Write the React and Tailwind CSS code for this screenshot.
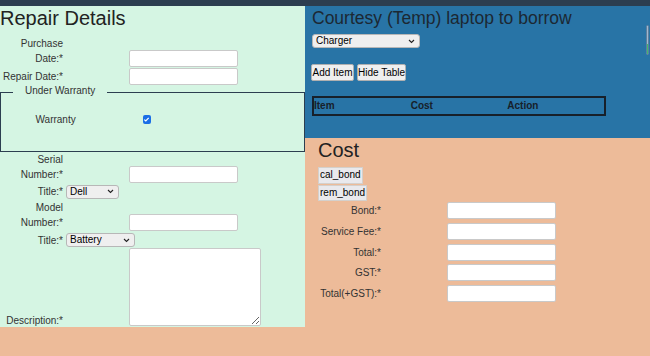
import React from 'react';

const Chevron = () => (
  <svg width="7" height="5" viewBox="0 0 7 5" className="absolute right-[5px] top-[4.5px] pointer-events-none">
    <polyline points="1,1 3.5,3.5 6,1" fill="none" stroke="#222" strokeWidth="1.1" />
  </svg>
);

const Select = ({ value, className }) => (
  <div className={`relative h-[14px] ${className}`}>
    <select
      defaultValue={value}
      className="block appearance-none w-full h-full bg-[#efefef] border border-[#b7b7b7] rounded-[3px] text-[10px] leading-[12px] pl-[3px] text-black"
    >
      <option>{value}</option>
    </select>
    <Chevron />
  </div>
);

const TextInput = ({ className = '' }) => (
  <input type="text" className={`w-[109px] h-[17px] bg-white border border-[#c9c9c9] rounded-[2px] shrink-0 ${className}`} />
);

const Label = ({ children, className = '' }) => (
  <div className={`w-[64px] shrink-0 text-right pr-[1px] ${className}`}>{children}</div>
);

const RepairDetails = () => (
  <div className="w-[305px] h-[321px] shrink-0 bg-[#d5f5e3] text-[#333] text-[10px] leading-[15px]">
    <h2 className="text-[20px] leading-[24px] text-[#222]">Repair Details</h2>

    {/* purchase date */}
    <div className="mt-[6px] flex items-end">
      <Label className="pb-[1px]">Purchase<br />Date:*</Label>
      <TextInput className="ml-[65px]" />
    </div>
    <div className="mt-[1px] flex items-center">
      <Label>Repair Date:*</Label>
      <TextInput className="ml-[65px]" />
    </div>

    <fieldset className="mt-[-2px] border-[1.5px] border-[#2c3e50]">
      <legend className="ml-[12px] px-[12px] pb-[4px]">Under Warranty</legend>
      <div className="flex items-center pt-[10px] pb-[24px] pl-[34.5px]">
        <span className="w-[107px]">Warranty</span>
        <span className="w-[8.5px] h-[8.5px] rounded-[2px] bg-[#1a6ee6] flex items-center justify-center">
          <svg width="7" height="7" viewBox="0 0 7 7">
            <polyline points="1.3,3.6 2.8,5 5.7,1.8" fill="none" stroke="#fff" strokeWidth="1.2" />
          </svg>
        </span>
      </div>
    </fieldset>

    {/* serial */}
    <div className="flex items-end">
      <Label className="pb-[1px]">Serial<br />Number:*</Label>
      <TextInput className="ml-[65px]" />
    </div>
    <div className="mt-[1px] flex items-center">
      <Label>Title:*</Label>
      <Select value="Dell" className="ml-[2px] w-[53px]" />
    </div>

    {/* model */}
    <div className="mt-[1px] flex items-end">
      <Label className="pb-[1px]">Model<br />Number:*</Label>
      <TextInput className="ml-[65px]" />
    </div>
    <div className="mt-[1.5px] flex items-center">
      <Label>Title:*</Label>
      <Select value="Battery" className="ml-[2px] w-[69px]" />
    </div>

    <div className="flex items-end">
      <Label>Description:*</Label>
      <textarea className="ml-[65px] mb-[2px] w-[132px] h-[78px] bg-white border border-[#c9c9c9] rounded-[2px] resize" />
    </div>
  </div>
);

const Courtesy = () => (
  <div className="relative h-[132px] bg-[#2874a6] pl-[7px] pt-[1.5px] text-[#1c2833]">
    <h3 className="text-[17.5px] leading-[21px]">Courtesy (Temp) laptop to borrow</h3>
    <Select value="Charger" className="mt-[5.5px] w-[108px]" />
    <div className="mt-[15.5px] ml-[-1px] flex gap-[3px]">
      <button className="w-[43px] h-[17px] bg-[#efefef] border border-[#b0b0b0] rounded-[2px] text-[10px] leading-[15px] text-black whitespace-nowrap overflow-hidden">
        Add Item
      </button>
      <button className="w-[49px] h-[17px] bg-[#efefef] border border-[#b0b0b0] rounded-[2px] text-[10px] leading-[15px] text-black whitespace-nowrap overflow-hidden">
        Hide Table
      </button>
    </div>
    <div className="mt-[15px] w-[294px] h-[20.5px] border-2 border-[#17202a] grid grid-cols-3 items-center text-[10px] font-bold text-[#17202a]">
      <span>Item</span>
      <span>Cost</span>
      <span>Action</span>
    </div>
    {/* scrollbar */}
    <div className="absolute right-[1px] top-[19px] w-[3.5px] h-[30px] rounded-[2px] bg-[#9fb9d2] border-[0.5px] border-[#5f7f9c] overflow-hidden flex flex-col justify-end">
      <div className="h-[10px] bg-[#43b86f]" />
    </div>
  </div>
);

const costRows = ['Bond:*', 'Service Fee:*', 'Total:*', 'GST:*', 'Total(+GST):*'];

const Cost = () => (
  <div className="flex-1 bg-[#edbb99] pl-[13px] text-[#333] text-[10px] leading-[15px]">
    <h2 className="text-[20px] leading-[24px] text-[#222]">Cost</h2>
    <div className="mt-[5px] flex flex-col items-start gap-[1px]">
      <button className="h-[16.5px] px-[1px] bg-[#e9e9ed] border border-[#d4d0cc] text-[10px] leading-[14px] text-black">cal_bond</button>
      <button className="h-[16.5px] px-[1px] bg-[#e9e9ed] border border-[#d4d0cc] text-[10px] leading-[14px] text-black">rem_bond</button>
    </div>
    <div className="mt-[1px] flex flex-col gap-[3.75px]">
      {costRows.map((r) => (
        <div key={r} className="flex items-center">
          <Label>{r}</Label>
          <TextInput className="ml-[65px]" />
        </div>
      ))}
    </div>
  </div>
);

export default function App() {
  return (
    <div className="min-h-[356px] bg-[#edbb99] font-['Liberation_Sans',Arial,sans-serif]">
      <div className="h-[6px] bg-[#2c3e50]" />
      <div className="flex">
        <RepairDetails />
        <div className="flex-1 flex flex-col">
          <Courtesy />
          <Cost />
        </div>
      </div>
    </div>
  );
}
